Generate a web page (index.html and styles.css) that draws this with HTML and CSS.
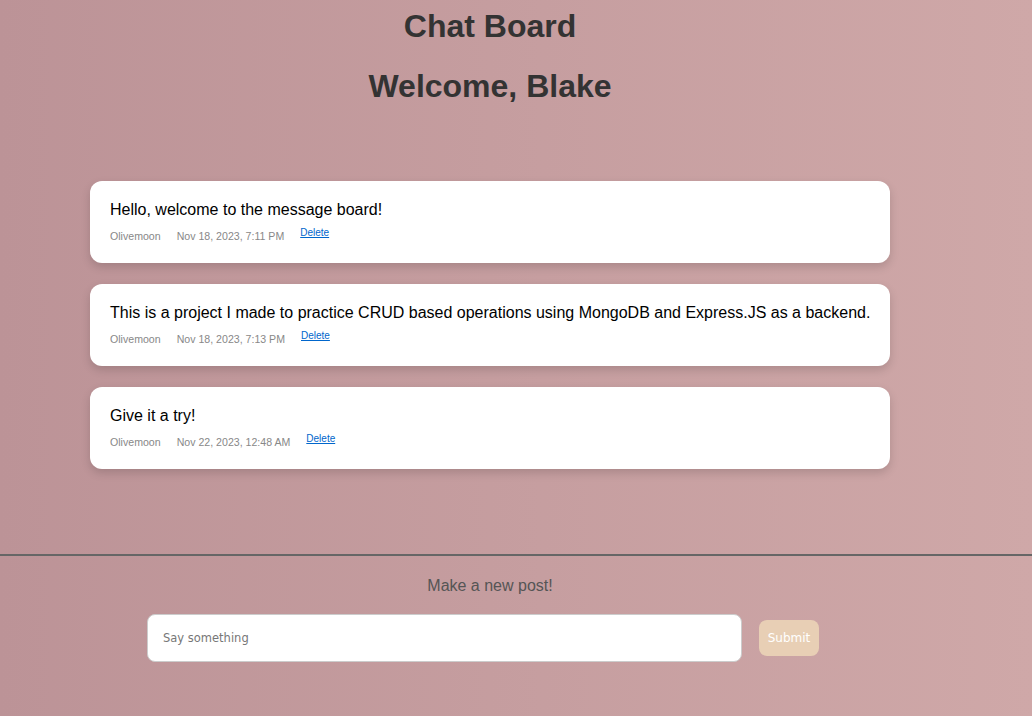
FILE: index.html
```html
<!DOCTYPE html>
<html>
<head>
<meta charset="utf-8">
<title>Chat Board</title>
<link rel="stylesheet" href="styles.css">
</head>
<body>
<div class="page">
  <header class="header">
    <h1 class="title">Chat Board</h1>
    <h2 class="welcome">Welcome, Blake</h2>
  </header>
  <main class="messages">
    <div class="card">
      <p class="text">Hello, welcome to the message board!</p>
      <div class="meta"><span class="author">Olivemoon</span><span class="date">Nov 18, 2023, 7:11 PM</span><a class="delete" href="#">Delete</a></div>
    </div>
    <div class="card">
      <p class="text">This is a project I made to practice CRUD based operations using MongoDB and Express.JS as a backend.</p>
      <div class="meta"><span class="author">Olivemoon</span><span class="date">Nov 18, 2023, 7:13 PM</span><a class="delete" href="#">Delete</a></div>
    </div>
    <div class="card">
      <p class="text">Give it a try!</p>
      <div class="meta"><span class="author">Olivemoon</span><span class="date">Nov 22, 2023, 12:48 AM</span><a class="delete" href="#">Delete</a></div>
    </div>
  </main>
</div>
<footer class="composer">
  <div class="page">
    <p class="prompt">Make a new post!</p>
    <form class="form">
      <input class="input" type="text" placeholder="Say something">
      <button class="submit" type="button">Submit</button>
    </form>
  </div>
</footer>
</body>
</html>
```
FILE: styles.css
```css
html, body {
  margin: 0;
  padding: 0;
}
body {
  min-height: 716px;
  background: linear-gradient(to right, #bc9397, #cfa8a8);
  font-family: "Liberation Sans", Arial, sans-serif;
  color: #333;
}
.page {
  width: 980px;
}
.header {
  text-align: center;
}
.title {
  margin: 0;
  padding-top: 8px;
  font-size: 32px;
  line-height: 37px;
  font-weight: bold;
  color: #333;
}
.welcome {
  margin: 23px 0 0;
  font-size: 32px;
  line-height: 37px;
  font-weight: bold;
  color: #333;
}
.messages {
  margin: 76px 90px 0;
  display: flex;
  flex-direction: column;
  gap: 21px;
  padding-bottom: 85px;
}
.card {
  background: #fff;
  border-radius: 12px;
  padding: 20px;
  box-shadow: 0 4px 10px rgba(0, 0, 0, 0.15);
}
.text {
  margin: 0;
  font-size: 16px;
  line-height: 18px;
  color: #000;
  white-space: nowrap;
}
.meta {
  margin-top: 8px;
  height: 16px;
  display: flex;
  align-items: flex-start;
  font-size: 10.6px;
  line-height: 13px;
  color: #888;
}
.author, .date {
  margin-top: 3px;
  margin-right: 16px;
}
.delete {
  font-size: 10px;
  line-height: 12px;
  color: #0066cc;
  text-decoration: underline;
}
.composer {
  border-top: 2px solid #666;
  padding-top: 20px;
}
.prompt {
  margin: 0;
  text-align: center;
  font-size: 16px;
  line-height: 20px;
  color: #555;
}
.form {
  margin: 18px 0 0 147px;
  display: flex;
  align-items: center;
  gap: 17px;
}
.input {
  box-sizing: border-box;
  width: 595px;
  height: 48px;
  border: 1px solid #ccc;
  border-radius: 8px;
  padding: 0 15px;
  font-family: "DejaVu Sans", Verdana, sans-serif;
  font-size: 11.5px;
  background: #fff;
  outline: none;
}
.input::placeholder {
  color: #777;
}
.submit {
  box-sizing: border-box;
  width: 60px;
  height: 36px;
  border: none;
  border-radius: 8px;
  background: #e8cfb5;
  color: #fff;
  font-family: "DejaVu Sans", Verdana, sans-serif;
  font-size: 12px;
  padding: 0;
}
```
